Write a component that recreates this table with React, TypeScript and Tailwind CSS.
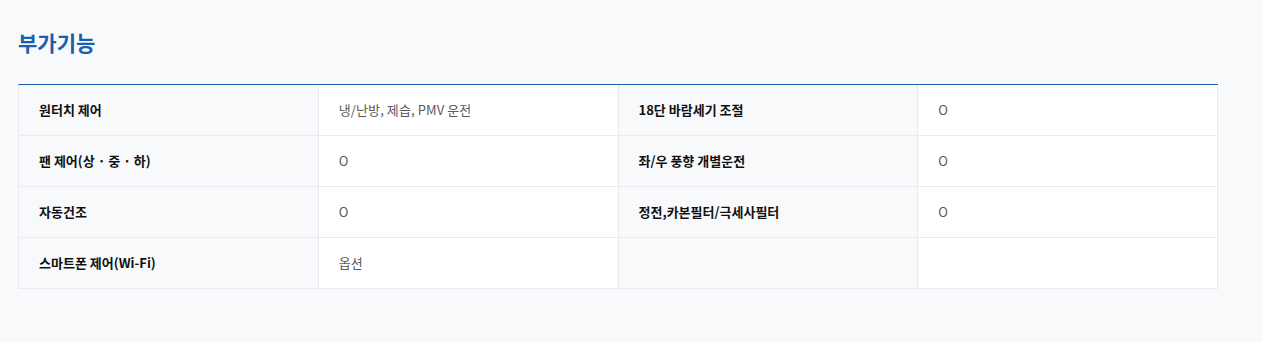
import React from "react";

const rows: [string, string, string, string][] = [
  ["원터치 제어", "냉/난방, 제습, PMV 운전", "18단 바람세기 조절", "O"],
  ["팬 제어(상 · 중 · 하)", "O", "좌/우 풍향 개별운전", "O"],
  ["자동건조", "O", "정전,카본필터/극세사필터", "O"],
  ["스마트폰 제어(Wi-Fi)", "옵션", "", ""],
];

export default function App() {
  return (
    <div
      className="min-h-[342px] w-full bg-[#f8f9fb]"
      style={{ fontFamily: '"Noto Sans CJK KR", "Noto Sans", sans-serif' }}
    >
      <div className="px-[18px] pt-[27px]">
        <h2 className="text-[21px] leading-[30px] font-bold text-[#1a5fae]">
          부가기능
        </h2>
        <div className="mt-[27px] w-[1200px] border-t border-[#1a5fae] border-l border-l-[#e9ebee]">
          {rows.map((r, i) => (
            <div key={i} className="grid grid-cols-4">
              {r.map((c, j) => (
                <div
                  key={j}
                  className={`flex h-[51px] items-center border-b border-r border-[#e9ebee] pl-[20px] text-[13px] ${
                    j % 2 === 0
                      ? "bg-[#f8f9fb] font-bold text-[#111111]"
                      : "bg-white text-[#5a5a5a] tracking-[0.1px]"
                  }`}
                >
                  {c}
                </div>
              ))}
            </div>
          ))}
        </div>
      </div>
    </div>
  );
}
